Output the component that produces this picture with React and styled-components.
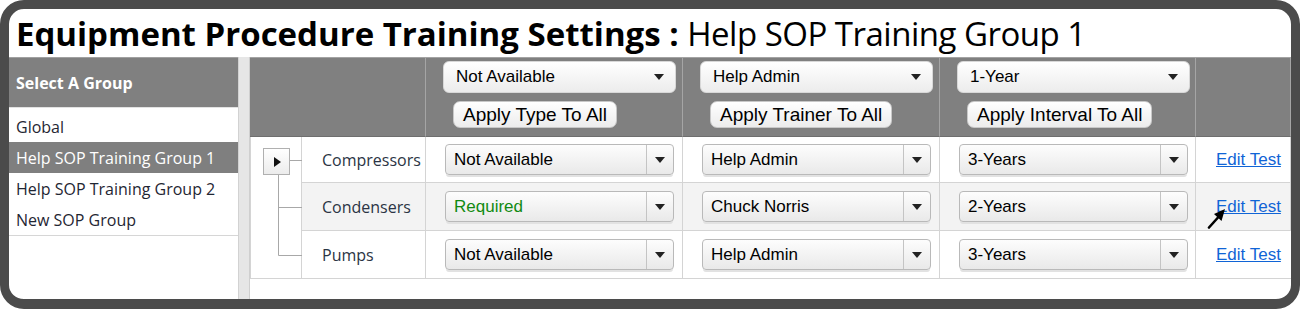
import React from 'react';
import styled, { createGlobalStyle } from 'styled-components';

const GlobalStyle = createGlobalStyle`
  html, body {
    margin: 0;
    padding: 0;
    background: #ffffff;
  }
  * {
    box-sizing: border-box;
  }
`;

const Frame = styled.div`
  width: 1300px;
  height: 309px;
  border: 9px solid #4b4b4b;
  border-bottom-width: 10px;
  border-radius: 24px;
  background: #fff;
  overflow: hidden;
  display: flex;
  flex-direction: column;
`;

const Title = styled.h1`
  margin: 0;
  height: 48px;
  line-height: 50px;
  padding-left: 7px;
  font-family: 'Open Sans', sans-serif;
  font-size: 33px;
  font-weight: 400;
  color: #000;
  white-space: nowrap;

  b {
    font-weight: 700;
  }

  span {
    letter-spacing: -0.5px;
  }
`;

const Body = styled.div`
  flex: 1;
  display: flex;
  min-height: 0;
`;

const Sidebar = styled.div`
  width: 230px;
  border-right: 1px solid #d2d2d2;
  display: flex;
  flex-direction: column;
`;

const SidebarHeader = styled.div`
  height: 50px;
  background: #808080;
  border-top: 1px solid #a0a0a0;
  color: #fff;
  font-family: 'Open Sans', sans-serif;
  font-weight: 700;
  font-size: 16px;
  display: flex;
  align-items: center;
  padding-left: 7px;
`;

const GroupList = styled.div`
  padding-top: 3px;
  border-top: 1px solid #e2e2e2;
  border-bottom: 1px solid #d6d6d6;
`;

const GroupItem = styled.div`
  height: 31px;
  display: flex;
  align-items: center;
  padding-left: 7px;
  font-family: 'Open Sans', sans-serif;
  font-size: 16px;
  color: ${(p) => (p.$active ? '#fff' : '#1f2633')};
  background: ${(p) => (p.$active ? '#7f7f7f' : 'transparent')};
`;

const Splitter = styled.div`
  width: 11px;
  background: #e6e6e6;
  border-right: 1px solid #cfcfcf;
`;

const Main = styled.div`
  flex: 1;
`;

const Grid = styled.div`
  display: grid;
  grid-template-columns: 52px 124px 257px 257px 256px 1fr;
  grid-template-rows: 80px 46px 48px 48px;
`;

const HeadCell = styled.div`
  grid-column: span ${(p) => p.$span || 1};
  background: #808080;
  border-top: 1px solid #a3a3a3;
  border-bottom: 1px solid #6e6e6e;
  border-right: 1px solid #a5a5a5;
  display: flex;
  flex-direction: column;
  align-items: flex-start;
  padding: 3px 0 0 17px;
  gap: 8px;

  &:last-child {
    border-right: none;
  }
`;

const HeadSelect = styled.div`
  width: 233px;
  height: 32px;
  border-radius: 6px;
  background: linear-gradient(#ffffff, #ececec);
  border: 1px solid #d8d8d8;
  display: flex;
  align-items: center;
  justify-content: space-between;
  padding: 0 11px 0 12px;
  font-family: 'Liberation Sans', Arial, sans-serif;
  font-size: 17px;
  color: #000;
`;

const ApplyButton = styled.button`
  margin-left: 10px;
  height: 27px;
  padding: 0 9px;
  border-radius: 7px;
  border: 1px solid #c8c8c8;
  background: linear-gradient(#ffffff, #ececec);
  font-family: 'Liberation Sans', Arial, sans-serif;
  font-size: 19px;
  color: #000;
  line-height: 25px;
`;

const Arrow = styled.span`
  width: 0;
  height: 0;
  border-left: 5px solid transparent;
  border-right: 5px solid transparent;
  border-top: 6px solid #222;
`;

const TreeCell = styled.div`
  grid-row: 2 / span 3;
  position: relative;
  border-left: 1px solid #d4d4d4;
  border-right: 1px solid #d4d4d4;
  border-bottom: 1px solid #d4d4d4;
`;

const ExpandButton = styled.button`
  position: absolute;
  left: 12px;
  top: 11px;
  width: 27px;
  height: 27px;
  padding: 0;
  border: 1px solid #b0b0b0;
  background: linear-gradient(#ffffff, #ececec);
  display: flex;
  align-items: center;
  justify-content: center;

  &::after {
    content: '';
    border-top: 5px solid transparent;
    border-bottom: 5px solid transparent;
    border-left: 7px solid #111;
    margin-left: 2px;
  }
`;

const Cell = styled.div`
  background: ${(p) => (p.$alt ? '#f3f3f3' : '#fff')};
  border-bottom: 1px solid #d4d4d4;
  border-right: 1px solid #d4d4d4;
  display: flex;
  align-items: center;
  padding-left: ${(p) => p.$pad || 19}px;
  font-family: 'Liberation Sans', Arial, sans-serif;
  font-size: 17px;
  position: relative;

  &:last-child {
    border-right: none;
  }
`;

const Name = styled.span`
  font-family: 'Open Sans', sans-serif;
  font-size: 16px;
  color: #2b3444;
`;

const RowSelect = styled.div`
  width: 229px;
  height: 31px;
  border: 1px solid #b9b9b9;
  border-radius: 4px;
  background: linear-gradient(#fdfdfd, #e9e9e9);
  box-shadow: 0 3px 0 -1px #e2e2e2;
  display: flex;
  align-items: stretch;
`;

const RowValue = styled.div`
  flex: 1;
  display: flex;
  align-items: center;
  padding-left: 8px;
  border-right: 1px solid #c4c4c4;
  color: ${(p) => p.$color || '#000'};
`;

const RowToggle = styled.div`
  width: 26px;
  display: flex;
  align-items: center;
  justify-content: center;
`;

const EditLink = styled.a`
  font-family: 'Liberation Sans', Arial, sans-serif;
  font-size: 17px;
  color: #1064d6;
  text-decoration: underline;
  cursor: pointer;
`;

const Cursor = styled.svg`
  position: absolute;
  left: 11px;
  top: 24px;
`;

const groups = ['Global', 'Help SOP Training Group 1', 'Help SOP Training Group 2', 'New SOP Group'];

const rows = [
  { name: 'Compressors', type: 'Not Available', trainer: 'Help Admin', interval: '3-Years' },
  { name: 'Condensers', type: 'Required', trainer: 'Chuck Norris', interval: '2-Years', color: '#118a11' },
  { name: 'Pumps', type: 'Not Available', trainer: 'Help Admin', interval: '3-Years' },
];

const Dropdown = ({ value, color }) => (
  <RowSelect>
    <RowValue $color={color}>{value}</RowValue>
    <RowToggle>
      <Arrow />
    </RowToggle>
  </RowSelect>
);

const HeaderControl = ({ value, label }) => (
  <HeadCell>
    <HeadSelect>
      {value}
      <Arrow />
    </HeadSelect>
    <ApplyButton>{label}</ApplyButton>
  </HeadCell>
);

export default function App() {
  return (
    <>
      <GlobalStyle />
      <Frame>
        <Title>
          <b>Equipment Procedure Training Settings :</b> <span>Help SOP Training Group 1</span>
        </Title>
        <Body>
          <Sidebar>
            <SidebarHeader>Select A Group</SidebarHeader>
            <GroupList>
              {groups.map((g) => (
                <GroupItem key={g} $active={g === 'Help SOP Training Group 1'}>
                  {g}
                </GroupItem>
              ))}
            </GroupList>
          </Sidebar>
          <Splitter />
          <Main>
            <Grid>
              <HeadCell $span={2} />
              <HeaderControl value="Not Available" label="Apply Type To All" />
              <HeaderControl value="Help Admin" label="Apply Trainer To All" />
              <HeaderControl value="1-Year" label="Apply Interval To All" />
              <HeadCell />

              <TreeCell>
                <svg width="51" height="141" style={{ display: 'block' }}>
                  <g stroke="#a8a8a8" strokeWidth="1" fill="none">
                    <path d="M39 23.5H51" />
                    <path d="M27.5 38V118.5H51" />
                    <path d="M27.5 70.5H51" />
                  </g>
                </svg>
                <ExpandButton />
              </TreeCell>

              {rows.map((r, i) => (
                <React.Fragment key={r.name}>
                  <Cell $alt={i === 1} $pad={20}>
                    <Name>{r.name}</Name>
                  </Cell>
                  <Cell $alt={i === 1}>
                    <Dropdown value={r.type} color={r.color} />
                  </Cell>
                  <Cell $alt={i === 1}>
                    <Dropdown value={r.trainer} />
                  </Cell>
                  <Cell $alt={i === 1}>
                    <Dropdown value={r.interval} />
                  </Cell>
                  <Cell $alt={i === 1} $pad={20}>
                    <EditLink>Edit Test</EditLink>
                    {i === 1 && (
                      <Cursor width="20" height="22" viewBox="0 0 20 22">
                        <path d="M2 20.5L11 10.5" stroke="#000" strokeWidth="2.6" strokeLinecap="round" />
                        <path d="M18 2L7 7L14.5 14Z" fill="#000" />
                      </Cursor>
                    )}
                  </Cell>
                </React.Fragment>
              ))}
            </Grid>
          </Main>
        </Body>
      </Frame>
    </>
  );
}
